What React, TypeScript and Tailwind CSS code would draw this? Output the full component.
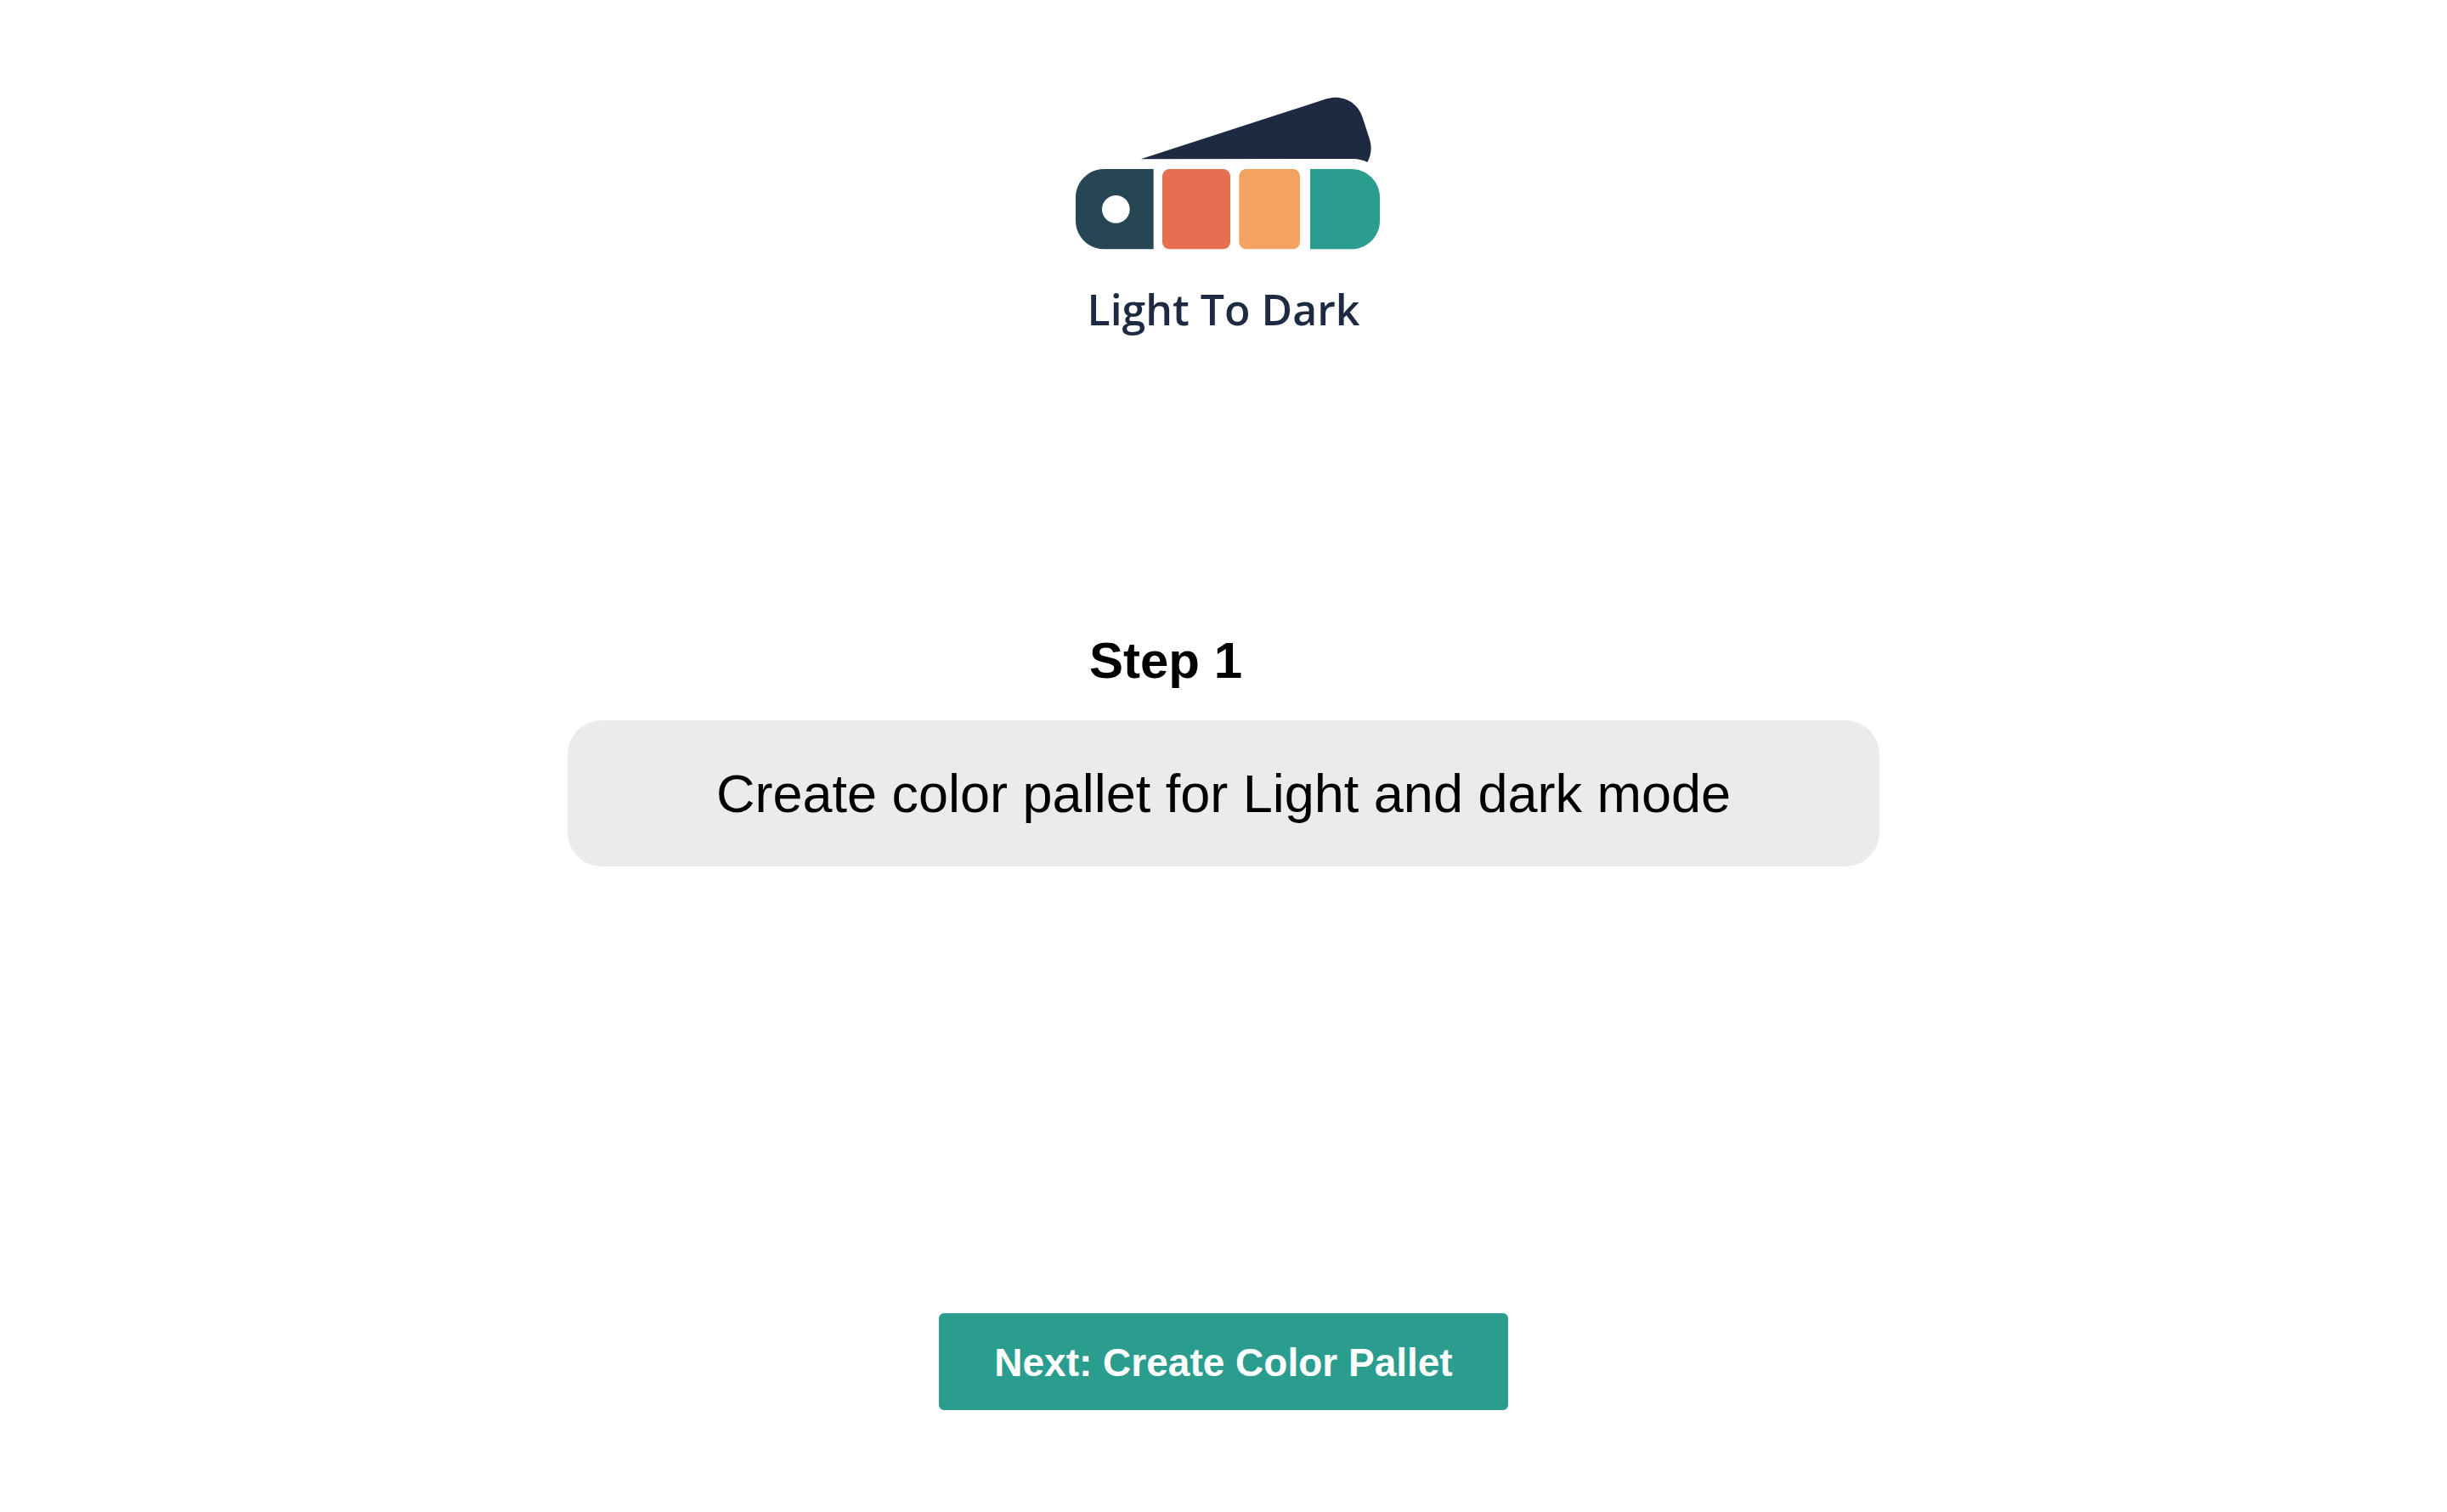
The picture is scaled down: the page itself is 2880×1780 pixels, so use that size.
interface StepCardProps {
  step: number;
  description: string;
}

const Logo = () => (
  <svg
    viewBox="18 42 1104 540"
    className="h-[180px] w-[368px]"
    role="img"
    aria-label="Color swatches"
  >
    {/* Swatch behind */}
    <path
      d="M278 262 L934 49 C988 32 1043 60 1060 112 L1086 192 C1095 222 1091 250 1078 273 Q1056 262 1030 261 Z"
      fill="#1e2a42"
    />

    {/* Front strip */}
    <path
      fillRule="evenodd"
      d="M148 297 H323 V580 H148 C93 580 48 535 48 480 V397 C48 342 93 297 148 297 Z M190 390 a49 49 0 1 0 0 98 a49 49 0 1 0 0 -98 Z"
      fill="#264653"
    />
    <rect x="354" y="297" width="240" height="283" rx="25" fill="#e76f51" />
    <rect x="625" y="297" width="215" height="283" rx="25" fill="#f4a261" />
    <path
      d="M876 297 H1022 C1077 297 1122 342 1122 397 V480 C1122 535 1077 580 1022 580 H876 Z"
      fill="#2a9d8f"
    />
  </svg>
);

const StepCard = ({ step, description }: StepCardProps) => (
  <section className="mt-[346px] flex flex-col items-center">
    <h1 className="pr-[136px] text-[60px] leading-[72px] font-bold">Step {step}</h1>
    <p className="mt-[34px] rounded-[40px] bg-[#ebebeb] px-[175px] py-[50px] text-center text-[63px] leading-[72px]">
      {description}
    </p>
  </section>
);

export default function App() {
  return (
    <main className="flex min-h-screen flex-col items-center bg-white pt-[114px] pb-[120px] font-['Liberation_Sans',Arial,sans-serif] text-black">
      <header className="flex flex-col items-center">
        <Logo />
        <span className="mt-[38px] font-['Open_Sans',sans-serif] text-[50px] leading-[64px] font-semibold text-[#1e2a42]">
          Light To Dark
        </span>
      </header>

      <StepCard step={1} description="Create color pallet for Light and dark mode" />

      <button
        type="button"
        className="mt-auto cursor-pointer rounded-md bg-[#2a9d8f] px-[65px] pt-[30px] pb-[28px] text-[46px] leading-[56px] font-bold text-white hover:bg-[#23877b]"
      >
        Next: Create Color Pallet
      </button>
    </main>
  );
}
